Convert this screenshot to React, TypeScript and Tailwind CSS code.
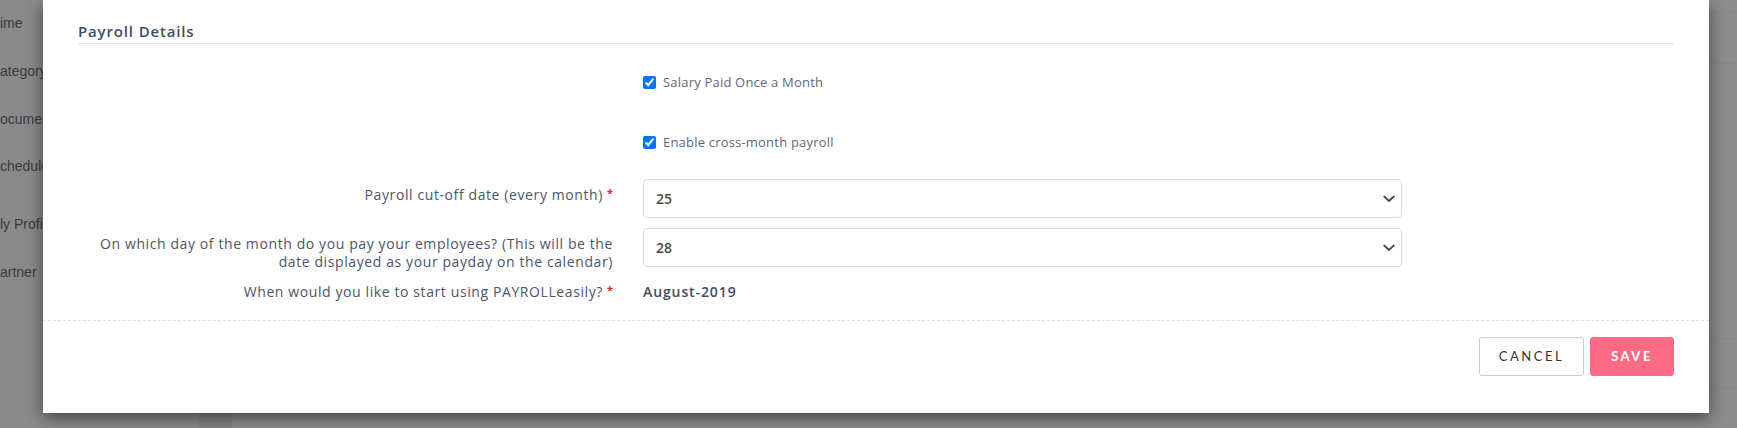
import React from "react";

const sidebarItems = [
  { t: "ime", y: "mt-[14px]" },
  { t: "ategory", y: "mt-[30px]" },
  { t: "ocuments", y: "mt-[30px]" },
  { t: "chedule", y: "mt-[29px]" },
  { t: "ly Profile", y: "mt-[40px]" },
  { t: "artner", y: "mt-[30px]" },
];

function Chevron() {
  return (
    <svg width="12" height="8" viewBox="0 0 12 8" className="absolute right-[6px] top-1/2 -translate-y-1/2" fill="none">
      <path d="M1.2 1.5 L6 6 L10.8 1.5" stroke="#4a4a4a" strokeWidth="1.8" strokeLinecap="round" strokeLinejoin="round" />
    </svg>
  );
}

function SelectBox({ value }: { value: string }) {
  return (
    <div className="relative w-[759px] h-[39px] border border-[#dcdcdc] rounded-[4px] bg-white flex items-center pl-[12px] text-[14px] font-semibold text-[#4a4a4a]">
      <span>{value}</span>
      <Chevron />
    </div>
  );
}

function Req() {
  return <span className="text-[#e8262f] text-[11px] font-bold ml-[4px] relative top-[-3px] tracking-normal">*</span>;
}

export default function App() {
  return (
    <div className="relative w-[1737px] h-[428px] overflow-hidden bg-[#8b8b8b]" style={{ fontFamily: "'Open Sans', 'Liberation Sans', sans-serif" }}>
      {/* underlying page (dimmed) */}
      <div className="absolute inset-0 flex">
        <div className="w-[199px] h-full flex flex-col text-[14px] text-[#3a3a3a] bg-[#8a8a8a]" style={{ fontFamily: "'Liberation Sans', Arial, sans-serif" }}>
          {sidebarItems.map((s) => (
            <div key={s.t} className={`${s.y} leading-[18px] whitespace-nowrap`}>{s.t}</div>
          ))}
        </div>
        <div className="w-[33px] h-full bg-[#828282] border-l border-[#858585]" />
        <div className="flex-1 h-full bg-[#8c8c8c] flex flex-col">
          <div className="h-[12px]" />
          <div className="h-[51px] border-t border-[#878787]" />
          <div className="h-[275px] border-t border-[#878787]" />
          <div className="h-[50px] border-t border-[#878787]" />
          <div className="flex-1 border-t border-[#878787]" />
        </div>
      </div>

      {/* modal */}
      <div className="absolute left-[43px] top-0 w-[1666px] h-[413px] bg-white shadow-[0_5px_15px_rgba(0,0,0,0.5)] flex flex-col">
        <div className="px-[35px] pb-[18px] flex flex-col">
          <div className="pt-[21px] pb-[2px] border-b border-[#e6e6e6] leading-[20px] text-[15px] font-semibold text-[#3f4d63] tracking-[0.85px]">
            Payroll Details
          </div>

          <div className="flex flex-col">
            <div className="flex mt-[28px]">
              <div className="w-[535px]" />
              <label className="ml-[30px] flex items-center gap-[7px] leading-[20px] text-[13px] text-[#5e6878] tracking-[0.2px]">
                <input type="checkbox" checked readOnly className="m-0 w-[13px] h-[13px]" />
                Salary Paid Once a Month
              </label>
            </div>
            <div className="flex mt-[40px]">
              <div className="w-[535px]" />
              <label className="ml-[30px] flex items-center gap-[7px] leading-[20px] text-[13px] text-[#5e6878] tracking-[0.2px]">
                <input type="checkbox" checked readOnly className="m-0 w-[13px] h-[13px]" />
                Enable cross-month payroll
              </label>
            </div>

            <div className="flex mt-[27px] items-start">
              <div className="w-[535px] text-right pt-[7px] leading-[18px] text-[14px] tracking-[0.6px] text-[#4b5669]">
                Payroll cut-off date (every month)<Req />
              </div>
              <div className="ml-[30px]">
                <SelectBox value="25" />
              </div>
            </div>

            <div className="flex mt-[10px] items-start">
              <div className="w-[535px] text-right pt-[7px] leading-[18px] text-[14px] tracking-[0.6px] text-[#4b5669]">
                On which day of the month do you pay your employees? (This will be the date displayed as your payday on the calendar)
              </div>
              <div className="ml-[30px]">
                <SelectBox value="28" />
              </div>
            </div>

            <div className="flex mt-[12px] items-start">
              <div className="w-[535px] text-right leading-[18px] text-[14px] tracking-[0.6px] text-[#4b5669]">
                When would you like to start using PAYROLLeasily?<Req />
              </div>
              <div className="ml-[30px] leading-[18px] text-[14px] font-semibold text-[#3f4d63] tracking-[0.9px]">
                August-2019
              </div>
            </div>
          </div>
        </div>

        <div className="border-t border-dashed border-[#e3e3e3] px-[35px] pt-[16px] flex justify-end gap-[6px]">
          <button className="w-[105px] h-[39px] border border-[#cccccc] rounded-[3px] bg-white text-[13px] text-[#333] tracking-[2.5px]" style={{ fontFamily: "Lato, 'Liberation Sans', sans-serif" }}>
            CANCEL
          </button>
          <button className="w-[84px] h-[39px] border border-[#ff6b85] rounded-[3px] bg-[#ff6b85] text-[13px] font-bold text-white tracking-[2.5px]" style={{ fontFamily: "Lato, 'Liberation Sans', sans-serif" }}>
            SAVE
          </button>
        </div>
      </div>
    </div>
  );
}
